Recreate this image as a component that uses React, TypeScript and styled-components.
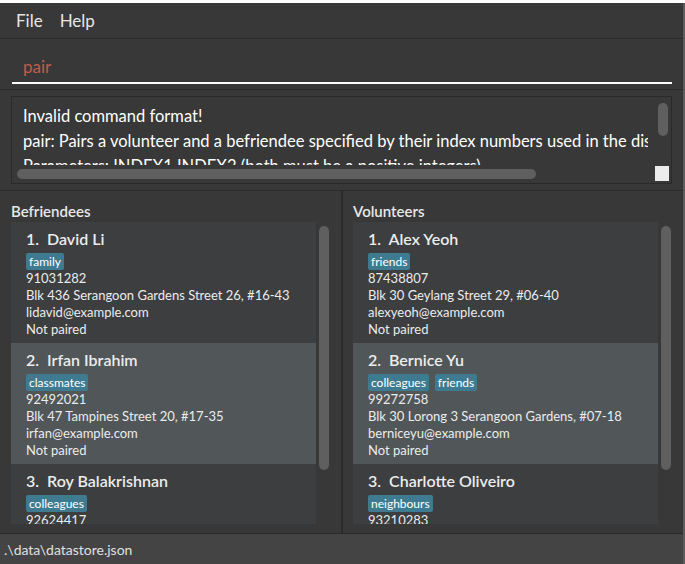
import React from 'react';
import styled, { createGlobalStyle } from 'styled-components';

type Person = {
	name: string,
	tags: string[],
	phone: string,
	address: string,
	email: string,
	pairing: string
}

const befriendees: Person[] = [
	{name: 'David Li', tags: ['family'], phone: '91031282', address: 'Blk 436 Serangoon Gardens Street 26, #16-43', email: 'lidavid@example.com', pairing: 'Not paired'},
	{name: 'Irfan Ibrahim', tags: ['classmates'], phone: '92492021', address: 'Blk 47 Tampines Street 20, #17-35', email: 'irfan@example.com', pairing: 'Not paired'},
	{name: 'Roy Balakrishnan', tags: ['colleagues'], phone: '92624417', address: 'Blk 45 Aljunied Street 85, #11-31', email: 'royb@example.com', pairing: 'Not paired'},
];

const volunteers: Person[] = [
	{name: 'Alex Yeoh', tags: ['friends'], phone: '87438807', address: 'Blk 30 Geylang Street 29, #06-40', email: 'alexyeoh@example.com', pairing: 'Not paired'},
	{name: 'Bernice Yu', tags: ['colleagues', 'friends'], phone: '99272758', address: 'Blk 30 Lorong 3 Serangoon Gardens, #07-18', email: 'berniceyu@example.com', pairing: 'Not paired'},
	{name: 'Charlotte Oliveiro', tags: ['neighbours'], phone: '93210283', address: 'Blk 11 Ang Mo Kio Street 74, #11-04', email: 'charlotte@example.com', pairing: 'Not paired'},
];

const GlobalStyle = createGlobalStyle`
	html, body {
		margin: 0;
		padding: 0;
		background: #ffffff;
	}
	body {
		font-family: Lato, "Noto Sans", sans-serif;
		overflow: hidden;
	}
	* {
		box-sizing: border-box;
	}
`;

const Window = styled.div`
	display: flex;
	flex-direction: column;
	margin-top: 3px;
	width: 685px;
	height: 561px;
	background: #383838;
	border-right: 2px solid #5c5c5c;
`;

const MenuBar = styled.div`
	display: flex;
	align-items: center;
	gap: 17px;
	height: 35px;
	padding-left: 16px;
	flex-shrink: 0;
`;

const MenuItem = styled.span`
	font-size: 17px;
	color: #e6e6e6;
`;

const CommandSection = styled.div`
	height: 51px;
	border-top: 1px solid #2a2a2a;
	padding: 0 11px 0 12px;
	flex-shrink: 0;
	display: flex;
	align-items: flex-start;
`;

const CommandInput = styled.div`
	width: 100%;
	height: 34px;
	margin-top: 11px;
	padding-left: 11px;
	display: flex;
	align-items: center;
	border-bottom: 2px solid #ffffff;
	font-size: 17px;
	color: #c55a4a;
`;

const ResultSection = styled.div`
	height: 101px;
	border-top: 1px solid #2a2a2a;
	padding: 6px 11px 0 11px;
	flex-shrink: 0;
`;

const ResultBox = styled.div`
	position: relative;
	height: 88px;
	border: 1px solid #2a2a2a;
	overflow: hidden;
`;

const ResultViewport = styled.div`
	width: 636px;
	height: 68px;
	overflow: hidden;
	padding: 7px 0 0 11px;
`;

const ResultLine = styled.div`
	font-size: 16.5px;
	line-height: 25px;
	color: #ffffff;
	white-space: nowrap;
`;

const Thumb = styled.div<{ $left: number, $top: number, $w: number, $h: number }>`
	position: absolute;
	left: ${p => p.$left}px;
	top: ${p => p.$top}px;
	width: ${p => p.$w}px;
	height: ${p => p.$h}px;
	border-radius: 5px;
	background: #5f5f5f;
`;

const Corner = styled.div`
	position: absolute;
	left: 643px;
	top: 69px;
	width: 14px;
	height: 15px;
	background: #ececec;
`;

const ListsSection = styled.div`
	flex: 1;
	display: flex;
	border-top: 1px solid #2a2a2a;
	border-bottom: 1px solid #2a2a2a;
	min-height: 0;
`;

const Column = styled.div<{ $divider?: boolean }>`
	width: ${p => p.$divider ? 343 : 340}px;
	display: flex;
	flex-direction: column;
	padding: 0 0 9px ${p => p.$divider ? 11 : 10}px;
	border-right: ${p => p.$divider ? '2px solid #2a2a2a' : 'none'};
`;

const ColumnTitle = styled.div`
	height: 31px;
	display: flex;
	align-items: flex-end;
	padding-bottom: 2px;
	font-size: 15px;
	font-weight: 600;
	color: #e8e8e8;
`;

const ListArea = styled.div`
	position: relative;
	flex: 1;
	min-height: 0;
	display: flex;
`;

const Cards = styled.div`
	width: 305px;
	overflow: hidden;
`;

const Card = styled.div<{ $odd: boolean }>`
	height: 121px;
	padding: 7px 0 0 15px;
	background: ${p => p.$odd ? '#515658' : '#3c3e3f'};
`;

const Name = styled.div`
	font-size: 16px;
	line-height: 20px;
	font-weight: 600;
	color: #ececec;
	white-space: pre;
`;

const Tags = styled.div`
	display: flex;
	align-items: center;
	gap: 6px;
	margin-top: 3px;
	height: 18px;
`;

const Tag = styled.span`
	background: #3e7b91;
	color: #ffffff;
	font-size: 12px;
	line-height: 17px;
	padding: 0 3px;
	border-radius: 2px;
`;

const Detail = styled.div`
	font-size: 13px;
	line-height: 17px;
	color: #ececec;
	white-space: nowrap;
`;

const StatusBar = styled.div`
	height: 30px;
	flex-shrink: 0;
	display: flex;
	align-items: center;
	padding-left: 4px;
	background: #444444;
	font-size: 14px;
	color: #e0e0e0;
`;

const PersonCard: React.FC<{ person: Person, index: number }> = ({ person, index }) => (
	<Card $odd={index % 2 === 1}>
		<Name>{`${index + 1}.  ${person.name}`}</Name>
		<Tags>
			{person.tags.map(t => <Tag key={t}>{t}</Tag>)}
		</Tags>
		<Detail>{person.phone}</Detail>
		<Detail>{person.address}</Detail>
		<Detail>{person.email}</Detail>
		<Detail>{person.pairing}</Detail>
	</Card>
);

const PersonList: React.FC<{ title: string, people: Person[], divider?: boolean }> = ({ title, people, divider }) => (
	<Column $divider={divider}>
		<ColumnTitle>{title}</ColumnTitle>
		<ListArea>
			<Cards>
				{people.map((p, i) => <PersonCard key={p.name} person={p} index={i} />)}
			</Cards>
			<Thumb $left={308} $top={4} $w={10} $h={244} />
		</ListArea>
	</Column>
);

export default function App() {
	return (
		<>
			<GlobalStyle />
			<Window>
				<MenuBar>
					<MenuItem>File</MenuItem>
					<MenuItem>Help</MenuItem>
				</MenuBar>
				<CommandSection>
					<CommandInput>pair</CommandInput>
				</CommandSection>
				<ResultSection>
					<ResultBox>
						<ResultViewport>
							<ResultLine>Invalid command format!</ResultLine>
							<ResultLine>pair: Pairs a volunteer and a befriendee specified by their index numbers used in the displayed lists.</ResultLine>
							<ResultLine>Parameters: INDEX1 INDEX2 (both must be a positive integers)</ResultLine>
						</ResultViewport>
						<Thumb $left={5} $top={72} $w={519} $h={10} />
						<Thumb $left={646} $top={6} $w={10} $h={33} />
						<Corner />
					</ResultBox>
				</ResultSection>
				<ListsSection>
					<PersonList title="Befriendees" people={befriendees} divider />
					<PersonList title="Volunteers" people={volunteers} />
				</ListsSection>
				<StatusBar>.\data\datastore.json</StatusBar>
			</Window>
		</>
	);
}
